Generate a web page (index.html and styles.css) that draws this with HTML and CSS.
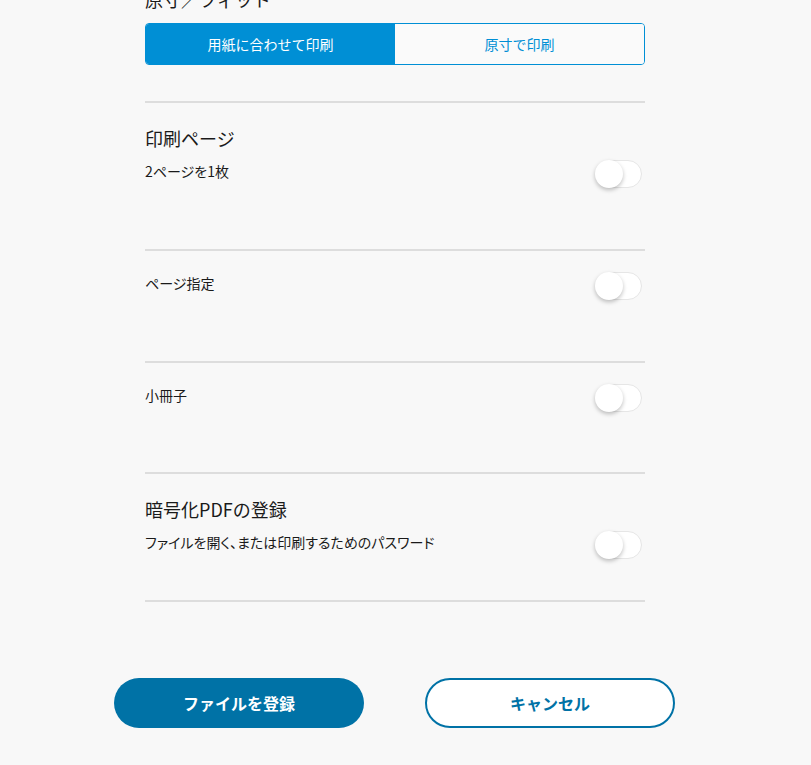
FILE: index.html
```html
<!DOCTYPE html>
<html lang="ja">
<head>
    <meta charset="UTF-8">
    <meta name="viewport" content="width=device-width, initial-scale=1.0">
    <title>印刷設定</title>
    <link rel="stylesheet" href="styles.css">
</head>
<body>
    <div class="page">
        <div class="settings">
            <div class="fit-block">
                <h3 class="section-title">原寸／フィット</h3>
                <div class="segmented">
                    <button class="seg-btn active">用紙に合わせて印刷</button>
                    <button class="seg-btn">原寸で印刷</button>
                </div>
            </div>

            <div class="section">
                <h3 class="section-title title-gap">印刷ページ</h3>
                <div class="option-row">
                    <span class="option-label">2ページを1枚</span>
                    <label class="toggle"><span class="knob"></span></label>
                </div>
            </div>

            <div class="section">
                <div class="option-row">
                    <span class="option-label">ページ指定</span>
                    <label class="toggle"><span class="knob"></span></label>
                </div>
            </div>

            <div class="section short">
                <div class="option-row">
                    <span class="option-label">小冊子</span>
                    <label class="toggle"><span class="knob"></span></label>
                </div>
            </div>

            <div class="section last">
                <h3 class="section-title title-gap">暗号化PDFの登録</h3>
                <div class="option-row">
                    <span class="option-label">ファイルを開く、または印刷するためのパスワード</span>
                    <label class="toggle"><span class="knob"></span></label>
                </div>
            </div>
        </div>

        <div class="actions">
            <button class="btn btn-primary">ファイルを登録</button>
            <button class="btn btn-outline">キャンセル</button>
        </div>
    </div>
</body>
</html>
```

FILE: styles.css
```css
:root {
    --bg: #f8f8f8;
    --text: #1a1a1a;
    --line: #dddddd;
    --accent: #008fd5;
    --primary: #0072a6;
    --white: #ffffff;
}

* {
    margin: 0;
    padding: 0;
    box-sizing: border-box;
}

body {
    font-family: "Noto Sans CJK JP", "Noto Sans", sans-serif;
    background-color: var(--bg);
    color: var(--text);
}

.page {
    margin-top: -14px;
    padding-right: 21px;
    display: flex;
    flex-direction: column;
    align-items: center;
}

.settings {
    width: 500px;
}

.fit-block {
    padding-bottom: 36px;
    border-bottom: 2px solid var(--line);
}

.section-title {
    font-size: 18px;
    line-height: 26px;
    font-weight: 400;
    margin-bottom: 11px;
}

.title-gap {
    margin-bottom: 10px;
}

.segmented {
    display: flex;
    height: 42px;
    border: 1px solid var(--accent);
    border-radius: 4px;
    overflow: hidden;
}

.seg-btn {
    flex: 1;
    border: none;
    background: #fafafa;
    color: var(--accent);
    font-family: inherit;
    font-size: 14px;
    font-weight: 400;
    cursor: pointer;
}

.seg-btn.active {
    background: var(--accent);
    color: var(--white);
}

.section {
    padding: 22px 0 61px;
    border-bottom: 2px solid var(--line);
}

.section.short {
    padding-bottom: 60px;
}

.section.last {
    padding-bottom: 41px;
}

.option-row {
    display: flex;
    justify-content: space-between;
    align-items: flex-start;
}

.option-label {
    font-size: 14px;
    line-height: 20px;
    font-weight: 400;
    font-feature-settings: "palt";
}

.toggle {
    position: relative;
    width: 46px;
    height: 28px;
    margin-top: -1px;
    margin-right: 3px;
    border: 1px solid #e6e6e6;
    border-radius: 14px;
    background: var(--white);
    cursor: pointer;
}

.knob {
    position: absolute;
    left: -2px;
    top: -1px;
    width: 28px;
    height: 28px;
    border-radius: 50%;
    background: var(--white);
    box-shadow: 0 2px 4px rgba(0, 0, 0, 0.25);
}

.actions {
    display: flex;
    gap: 61px;
    margin-top: 76px;
    margin-left: -1px;
}

.btn {
    width: 250px;
    height: 50px;
    border-radius: 25px;
    font-family: inherit;
    font-size: 16px;
    font-weight: 700;
    cursor: pointer;
}

.btn-primary {
    background: var(--primary);
    color: var(--white);
    border: none;
}

.btn-outline {
    background: var(--white);
    color: var(--primary);
    border: 2px solid var(--primary);
}
```
